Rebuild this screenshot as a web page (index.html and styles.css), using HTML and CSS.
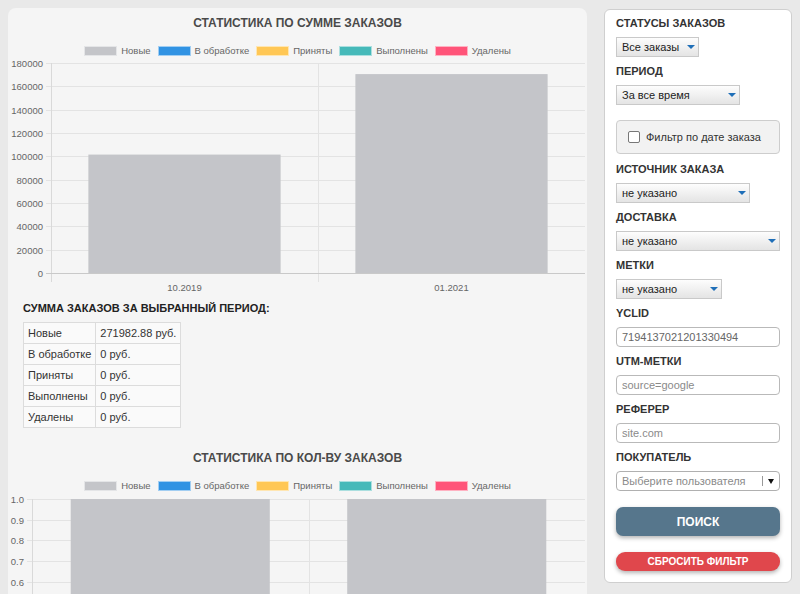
FILE: index.html
```html
<!DOCTYPE html>
<html lang="ru">
<head>
    <meta charset="UTF-8">
    <meta name="viewport" content="width=device-width, initial-scale=1.0">
    <title>Статистика заказов</title>
    <link rel="stylesheet" href="styles.css">
</head>
<body>
    <div class="layout">
        <div class="stats-panel">
            <section class="chart-block">
                <h3 class="chart-title">СТАТИСТИКА ПО СУММЕ ЗАКАЗОВ</h3>
                <ul class="legend">
                    <li><span class="swatch swatch-new"></span>Новые</li>
                    <li><span class="swatch swatch-processing"></span>В обработке</li>
                    <li><span class="swatch swatch-accepted"></span>Приняты</li>
                    <li><span class="swatch swatch-done"></span>Выполнены</li>
                    <li><span class="swatch swatch-deleted"></span>Удалены</li>
                </ul>
                <svg id="sum-chart" class="chart" width="579" height="240"></svg>
            </section>

            <div class="totals">
                <h4 class="totals-title">СУММА ЗАКАЗОВ ЗА ВЫБРАННЫЙ ПЕРИОД:</h4>
                <table class="totals-table">
                    <tr><td>Новые</td><td>271982.88 руб.</td></tr>
                    <tr><td>В обработке</td><td>0 руб.</td></tr>
                    <tr><td>Приняты</td><td>0 руб.</td></tr>
                    <tr><td>Выполнены</td><td>0 руб.</td></tr>
                    <tr><td>Удалены</td><td>0 руб.</td></tr>
                </table>
            </div>

            <section class="chart-block chart-block-count">
                <h3 class="chart-title">СТАТИСТИКА ПО КОЛ-ВУ ЗАКАЗОВ</h3>
                <ul class="legend">
                    <li><span class="swatch swatch-new"></span>Новые</li>
                    <li><span class="swatch swatch-processing"></span>В обработке</li>
                    <li><span class="swatch swatch-accepted"></span>Приняты</li>
                    <li><span class="swatch swatch-done"></span>Выполнены</li>
                    <li><span class="swatch swatch-deleted"></span>Удалены</li>
                </ul>
                <svg id="count-chart" class="chart" width="579" height="240"></svg>
            </section>
        </div>

        <form class="filter-panel" onsubmit="return false;">
            <div class="field-label">СТАТУСЫ ЗАКАЗОВ</div>
            <div class="select-box select-status"><span>Все заказы</span></div>

            <div class="field-label">ПЕРИОД</div>
            <div class="select-box select-period"><span>За все время</span></div>

            <label class="date-filter">
                <input type="checkbox" class="date-filter-check">
                <span>Фильтр по дате заказа</span>
            </label>

            <div class="field-label">ИСТОЧНИК ЗАКАЗА</div>
            <div class="select-box select-source"><span>не указано</span></div>

            <div class="field-label">ДОСТАВКА</div>
            <div class="select-box select-delivery"><span>не указано</span></div>

            <div class="field-label">МЕТКИ</div>
            <div class="select-box select-tags"><span>не указано</span></div>

            <div class="field-label">YCLID</div>
            <input type="text" class="text-input" value="7194137021201330494">

            <div class="field-label">UTM-МЕТКИ</div>
            <input type="text" class="text-input" placeholder="source=google">

            <div class="field-label">РЕФЕРЕР</div>
            <input type="text" class="text-input" placeholder="site.com">

            <div class="field-label">ПОКУПАТЕЛЬ</div>
            <div class="user-select">
                <span class="user-select-placeholder">Выберите пользователя</span>
                <span class="user-select-arrow"></span>
            </div>

            <button type="submit" class="btn-search">ПОИСК</button>
            <button type="reset" class="btn-reset">СБРОСИТЬ ФИЛЬТР</button>
        </form>
    </div>

    <script>
        const SVG_NS = 'http://www.w3.org/2000/svg';

        function addNode(svg, tag, attrs, text) {
            const node = document.createElementNS(SVG_NS, tag);
            for (const key in attrs) {
                node.setAttribute(key, attrs[key]);
            }
            if (text !== undefined) {
                node.textContent = text;
            }
            svg.appendChild(node);
            return node;
        }

        // Simple bar chart: horizontal grid with ticks, one bar per category
        function drawBarChart(svg, cfg) {
            const { left, right, top, bottom, steps, max, format, categories, values } = cfg;
            const catWidth = (right - left) / categories.length;

            // horizontal grid lines and tick labels
            for (let i = 0; i < steps; i++) {
                const y = Math.round(top + (bottom - top) * i / steps) + 0.5;
                addNode(svg, 'line', { x1: left - 5, x2: right, y1: y, y2: y, class: 'grid-line' });
            }
            for (let i = 0; i <= steps; i++) {
                const y = Math.round(top + (bottom - top) * i / steps) + 0.5;
                addNode(svg, 'text', { x: left - 8, y: y + 3.5, class: 'tick', 'text-anchor': 'end' },
                    format(max - max * i / steps));
            }

            // vertical lines between categories and the left axis
            for (let c = 1; c < categories.length; c++) {
                const x = Math.round(left + catWidth * c) + 0.5;
                addNode(svg, 'line', { x1: x, x2: x, y1: top, y2: bottom + 9, class: 'grid-line' });
            }
            addNode(svg, 'line', { x1: left + 0.5, x2: left + 0.5, y1: top, y2: bottom + 9, class: 'axis-line' });

            // bars take 72% of the category width
            categories.forEach(function (label, c) {
                const center = left + catWidth * (c + 0.5);
                const barWidth = catWidth * 0.72;
                const height = (bottom - top) * values[c] / max;
                addNode(svg, 'rect', {
                    x: center - barWidth / 2,
                    y: bottom - height,
                    width: barWidth,
                    height: height,
                    class: 'bar'
                });
                addNode(svg, 'text', { x: center, y: bottom + 17.5, class: 'tick', 'text-anchor': 'middle' }, label);
            });

            const zeroY = Math.round(bottom) + 0.5;
            addNode(svg, 'line', { x1: left - 5, x2: right, y1: zeroY, y2: zeroY, class: 'zero-line' });
        }

        drawBarChart(document.getElementById('sum-chart'), {
            left: 43, right: 577, top: 7, bottom: 217,
            steps: 9, max: 180000,
            format: function (v) { return String(Math.round(v)); },
            categories: ['10.2019', '01.2021'],
            values: [101500, 170482.88]
        });

        drawBarChart(document.getElementById('count-chart'), {
            left: 24, right: 577, top: 8, bottom: 215,
            steps: 10, max: 1,
            format: function (v) { return v < 0.001 ? '0' : v.toFixed(1); },
            categories: ['10.2019', '01.2021'],
            values: [1, 1]
        });
    </script>
</body>
</html>
```

FILE: styles.css
```css
body {
    margin: 8px;
    background-color: #e9e9e9;
    font-family: "Liberation Sans", Arial, sans-serif;
    color: #333;
}

.layout {
    display: flex;
    align-items: flex-start;
    gap: 17px;
}

/* left column with charts */

.stats-panel {
    flex: 1;
    min-width: 0;
    padding: 8px 0 24px;
    background-color: #f5f5f5;
    border-radius: 8px;
}

.chart-title {
    margin: 0;
    font-size: 12px;
    line-height: 14px;
    font-weight: bold;
    text-align: center;
    color: #4a4a4a;
}

.legend {
    display: flex;
    justify-content: center;
    gap: 7px;
    margin: 16px 0 0;
    padding: 0;
    list-style: none;
    font-size: 9.5px;
    line-height: 10px;
    color: #666;
}

.legend li {
    display: flex;
    align-items: center;
    gap: 4px;
}

.swatch {
    width: 33px;
    height: 10px;
    box-sizing: border-box;
    border: 1px solid rgba(255, 255, 255, 0.55);
}

.swatch-new { background-color: #c4c5c9; }
.swatch-processing { background-color: #3193e3; }
.swatch-accepted { background-color: #ffc755; }
.swatch-done { background-color: #46b9b9; }
.swatch-deleted { background-color: #ff5479; }

.chart {
    display: block;
}

.chart .grid-line {
    stroke: #e3e3e3;
    stroke-width: 1;
}

.chart .axis-line {
    stroke: #d9d9d9;
    stroke-width: 1;
}

.chart .zero-line {
    stroke: #c9c9c9;
    stroke-width: 1;
}

.chart .bar {
    fill: #c4c5c9;
}

.chart .tick {
    font-family: "Liberation Sans", Arial, sans-serif;
    font-size: 9.5px;
    fill: #666;
}

.totals {
    padding: 0 15px;
}

.totals-title {
    margin: 5px 0 7px;
    font-size: 11px;
    line-height: 14px;
    font-weight: bold;
    color: #222;
}

.totals-table {
    border-collapse: collapse;
    background-color: #fafafa;
    font-size: 11px;
    color: #333;
}

.totals-table td {
    height: 20px;
    padding: 0 4px;
    border: 1px solid #dcdcdc;
    white-space: nowrap;
}

.chart-block-count {
    margin-top: 23px;
}

/* right column with filters */

.filter-panel {
    width: 188px;
    box-sizing: border-box;
    margin-top: 1px;
    padding: 6px 11px 11px;
    background-color: #fff;
    border: 1px solid #cfcfcf;
    border-radius: 6px;
}

.field-label {
    margin-bottom: 7px;
    font-size: 11px;
    line-height: 14px;
    font-weight: bold;
    color: #333;
}

.select-box {
    position: relative;
    height: 20px;
    box-sizing: border-box;
    margin-bottom: 7px;
    padding: 0 16px 0 5px;
    border: 1px solid #c9c9c9;
    background: linear-gradient(#fdfdfd, #e4e4e4);
    font-size: 11px;
    line-height: 18px;
    color: #222;
    white-space: nowrap;
}

.select-box::after {
    content: "";
    position: absolute;
    right: 3px;
    top: 7px;
    border-left: 4px solid transparent;
    border-right: 4px solid transparent;
    border-top: 4px solid #1f6fb8;
}

.select-status { width: 83px; }
.select-period { width: 124px; }
.select-source { width: 134px; }
.select-delivery { width: 164px; }
.select-tags { width: 106px; }

.date-filter {
    display: flex;
    align-items: center;
    gap: 6px;
    height: 34px;
    box-sizing: border-box;
    margin: 15px 0 8px;
    padding: 0 11px;
    background-color: #f2f2f2;
    border: 1px solid #cdcdcd;
    border-radius: 4px;
    font-size: 11px;
    color: #333;
}

.date-filter-check {
    appearance: none;
    width: 12px;
    height: 12px;
    margin: 0;
    background-color: #fff;
    border: 1px solid #777;
    border-radius: 2px;
}

.text-input {
    display: block;
    width: 100%;
    height: 20px;
    box-sizing: border-box;
    margin: 0 0 7px;
    padding: 0 5px;
    border: 1px solid #b9b9b9;
    border-radius: 4px;
    font-family: inherit;
    font-size: 11px;
    color: #666;
}

.text-input::placeholder {
    color: #8a8a8a;
}

.user-select {
    display: flex;
    align-items: center;
    height: 20px;
    box-sizing: border-box;
    padding: 0 5px;
    border: 1px solid #b0b0b0;
    border-radius: 4px;
    font-size: 11px;
}

.user-select-placeholder {
    flex: 1;
    color: #8a8a8a;
}

.user-select-arrow {
    display: flex;
    align-items: center;
    height: 10px;
    padding-left: 5px;
    border-left: 1px solid #999;
}

.user-select-arrow::after {
    content: "";
    border-left: 3px solid transparent;
    border-right: 3px solid transparent;
    border-top: 5px solid #111;
}

.btn-search {
    display: block;
    width: 100%;
    height: 29px;
    margin-top: 16px;
    border: none;
    border-radius: 7px;
    background-color: #56768c;
    box-shadow: 0 2px 4px rgba(0, 0, 0, 0.3);
    font-family: inherit;
    font-size: 12px;
    font-weight: bold;
    color: #fff;
    cursor: pointer;
}

.btn-reset {
    display: block;
    width: 100%;
    height: 19px;
    margin-top: 16px;
    border: none;
    border-radius: 9px;
    background-color: #e0474c;
    box-shadow: 0 2px 4px rgba(0, 0, 0, 0.3);
    font-family: inherit;
    font-size: 10px;
    font-weight: bold;
    color: #fff;
    cursor: pointer;
}
```
